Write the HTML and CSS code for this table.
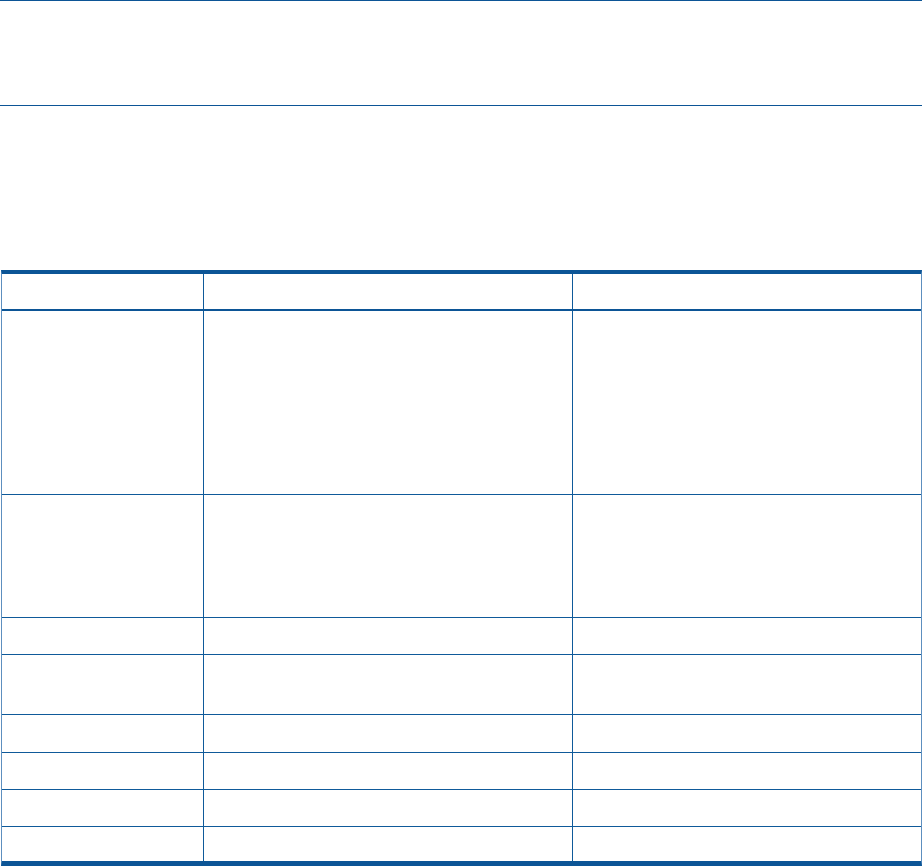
FILE: index.html
```html
<!DOCTYPE html>
<html>
<head>
<meta charset="utf-8">
<link rel="stylesheet" href="styles.css">
</head>
<body>
<div class="header-band"></div>
<div class="table">
  <div class="row row-head"><div class="cell"></div><div class="cell"></div><div class="cell"></div></div>
  <div class="row r1"><div class="cell"></div><div class="cell"></div><div class="cell"></div></div>
  <div class="row r2"><div class="cell"></div><div class="cell"></div><div class="cell"></div></div>
  <div class="row r3"><div class="cell"></div><div class="cell"></div><div class="cell"></div></div>
  <div class="row r4"><div class="cell"></div><div class="cell"></div><div class="cell"></div></div>
  <div class="row r5"><div class="cell"></div><div class="cell"></div><div class="cell"></div></div>
  <div class="row r6"><div class="cell"></div><div class="cell"></div><div class="cell"></div></div>
  <div class="row r7"><div class="cell"></div><div class="cell"></div><div class="cell"></div></div>
  <div class="row r8 last"><div class="cell"></div><div class="cell"></div><div class="cell"></div></div>
</div>
</body>
</html>
```
FILE: styles.css
```css
html, body {
  margin: 0;
  padding: 0;
  background: #ffffff;
  font-family: "Liberation Sans", Arial, sans-serif;
}
* { box-sizing: border-box; }

.header-band {
  width: 922px;
  height: 106px;
  border-top: 1px solid #0c5596;
  border-bottom: 1px solid #0c5596;
}

.table {
  margin-top: 164px;
  margin-left: 1px;
  width: 921px;
  border-top: 4px solid #0c5596;
  border-bottom: 5px solid #0c5596;
  border-left: 1px solid #5d8fbf;
  border-right: 1px solid #5d8fbf;
}

.row {
  display: grid;
  grid-template-columns: 201px 369px 349px;
  border-bottom: 1px solid #0f5a9a;
}
.row.last { border-bottom: none; }
.row-head { height: 37px; border-bottom: 2px solid #0c5596; }
.r1 { height: 184px; }
.r2 { height: 123px; }
.r3 { height: 37px; }
.r4 { height: 60px; }
.r5 { height: 38px; }
.r6 { height: 37px; }
.r7 { height: 37px; }
.r8 { height: 34px; }

.cell + .cell { border-left: 1px solid #0f5a9a; }
```
